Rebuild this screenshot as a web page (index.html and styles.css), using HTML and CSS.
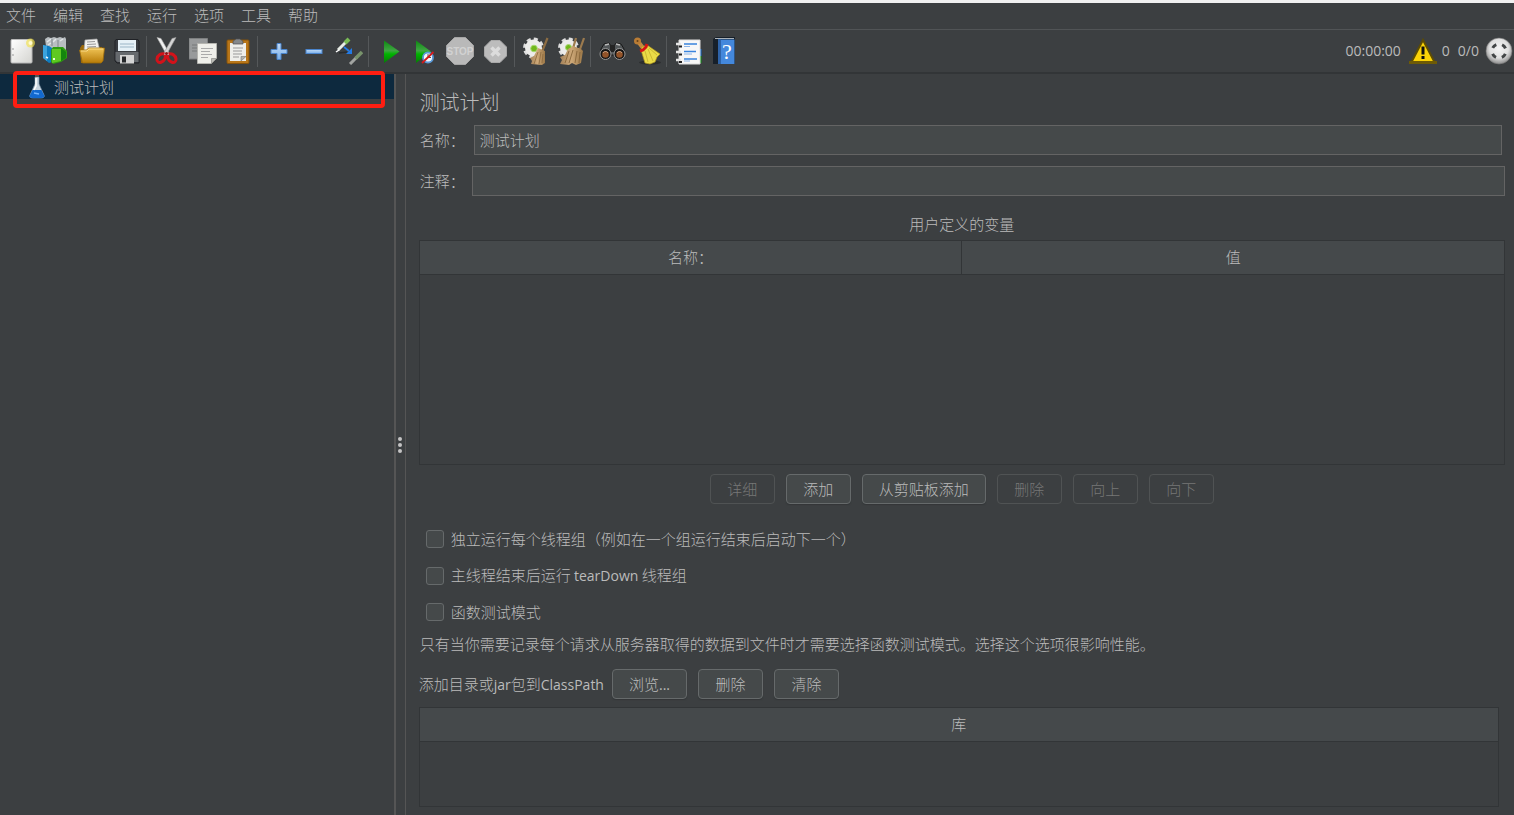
FILE: index.html
```html
<!DOCTYPE html>
<html lang="zh-CN">
<head>
    <meta charset="UTF-8">
    <meta name="viewport" content="width=device-width, initial-scale=1.0">
    <title>测试计划</title>
    <link rel="stylesheet" href="styles.css">
</head>
<body>
    <svg class="defs" width="0" height="0" aria-hidden="true">
        <defs>
            <linearGradient id="paper" x1="0" y1="0" x2="1" y2="1">
                <stop offset="0" stop-color="#ffffff"/><stop offset="1" stop-color="#d4d4d0"/>
            </linearGradient>
            <linearGradient id="green" x1="0" y1="0" x2="0" y2="1">
                <stop offset="0" stop-color="#0c8a10"/><stop offset="0.45" stop-color="#3fa642"/><stop offset="0.6" stop-color="#00b400"/><stop offset="1" stop-color="#067a06"/>
            </linearGradient>
            <linearGradient id="gold" x1="0" y1="0" x2="0" y2="1">
                <stop offset="0" stop-color="#f0c456"/><stop offset="1" stop-color="#b87c08"/>
            </linearGradient>
            <linearGradient id="blue" x1="0" y1="0" x2="0" y2="1">
                <stop offset="0" stop-color="#c4dcf6"/><stop offset="1" stop-color="#7ab0ea"/>
            </linearGradient>
            <linearGradient id="straw" x1="0" y1="0" x2="1" y2="0">
                <stop offset="0" stop-color="#a5835a"/><stop offset="0.5" stop-color="#cda878"/><stop offset="1" stop-color="#9b7747"/>
            </linearGradient>
            <radialGradient id="ball" cx="0.5" cy="0.4" r="0.6">
                <stop offset="0" stop-color="#f4f4f4"/><stop offset="0.6" stop-color="#e0e0e0"/><stop offset="1" stop-color="#8c8c8c"/>
            </radialGradient>
        </defs>
    </svg>

    <nav class="menubar">
        <button>文件</button>
        <button>编辑</button>
        <button>查找</button>
        <button>运行</button>
        <button>选项</button>
        <button>工具</button>
        <button>帮助</button>
    </nav>

    <header class="toolbar">
        <button aria-label="新建">
            <svg viewBox="0 0 28 28"><rect x="3" y="2.5" width="21" height="23.5" rx="1" fill="url(#paper)" stroke="#b9b9b9"/><path d="M5 11v2M5 17v2" stroke="#999"/><circle cx="22.500" cy="6" r="4.500" fill="#f3e24c" opacity=".65"/><circle cx="22.500" cy="6" r="2" fill="#fffbd0"/></svg>
        </button>
        <button aria-label="模板">
            <svg viewBox="0 0 28 28"><path d="M2 2l3-2 3 1 3-1 3 1 3-1 3 1 2-1 1 2v14H4z" fill="#b9bec1"/><path d="M4 5l4-3M10 5l3-3M17 4l3-2M5 8l3-2" stroke="#e3e6e8" stroke-width="1.500"/><path d="M9 2v7M15 3v8" stroke="#7f878b"/><path d="M0 8l6 1 3 2v14l-3 1-6-5z" fill="#0f7cc0"/><path d="M0 8l4 1v15l-4-3z" fill="#3ba3dd"/><path d="M3 20l2 1" stroke="#e8f6ff" stroke-width="1.500"/><path d="M8 13l2-3h10l4 4v7l-6 4-8 2-2-2z" fill="#2f9d10"/><path d="M9 12l9 0v12l-9 2z" fill="#5fc922"/><path d="M18 11l5 4v6l-5 3z" fill="#14850d"/><path d="M10 21h2v2h-2z" fill="#e9ffdc"/></svg>
        </button>
        <button aria-label="打开">
            <svg viewBox="0 0 28 28"><path d="M2 11l2-3h7l2 2h11v16H3z" fill="#9c6a0b"/><path d="M7 3l12-1 3 12H6z" fill="#f2f2f0" stroke="#aaa" stroke-width=".7"/><path d="M9 5l8-.5M9 7.500l9-.5M9 10l9-.5" stroke="#999"/><path d="M1.500 13h7l2-2h16l-1.500 13-2 2H4.500z" fill="url(#gold)" stroke="#a06c08" stroke-width=".8"/><path d="M3 14h6l2-2h14" stroke="#ffe49b" fill="none" stroke-width=".8"/></svg>
        </button>
        <button aria-label="保存">
            <svg viewBox="0 0 28 28"><path d="M3 2.500h22l1 2V26H4l-2-2V4z" fill="#3a3d42" stroke="#202226"/><path d="M2.500 15h23v10h-21l-2-2z" fill="#666a6e"/><rect x="5" y="3" width="18" height="11" fill="#e5f0f6"/><path d="M7 7h14M7 10h14" stroke="#9bb5c6"/><rect x="7" y="18" width="14" height="8.500" fill="#d4d4d4"/><rect x="9" y="19.500" width="4" height="6" fill="#26282b"/></svg>
        </button>
        <span class="sep"></span>
        <button aria-label="剪切">
            <svg viewBox="0 0 28 28"><path d="M3 .5l4 1 9 16-3 1z" fill="#f1f1f1" stroke="#aaa" stroke-width=".6"/><path d="M22 .5l-4 1-9 16 3 1z" fill="#d4d4d4" stroke="#999" stroke-width=".6"/><path d="M10.500 17c-3-1-7 1-7.500 5-.3 3 2 4 4.500 3 3-1 4-4 4-7M14.500 17c3-1 7 1 7.500 5 .3 3-2 4-4.500 3-3-1-4-4-4-7" fill="none" stroke="#d3121a" stroke-width="3"/><circle cx="12.500" cy="16.500" r="1.500" fill="#8d1015"/></svg>
        </button>
        <button aria-label="复制">
            <svg viewBox="0 0 28 28"><path d="M0 1.500h18.500V22H0z" fill="#989a9b" stroke="#7d7f80"/><path d="M3 8h9M3 11h6M3 14h6" stroke="#767879"/><path d="M8.500 6.500h19v15l-5 5h-14z" fill="#efefea" stroke="#b5b5b0"/><path d="M22.500 26.500v-5h5z" fill="#bdbdb8" stroke="#8d8d88" stroke-width=".7"/><path d="M12 11.500h12M12 14.500h9M12 17.500h11M12 20.500h7" stroke="#aaa"/></svg>
        </button>
        <button aria-label="粘贴">
            <svg viewBox="0 0 28 28"><rect x="3" y="3" width="22" height="23.500" rx="1" fill="#b87619" stroke="#85520b"/><path d="M6 6h16v18H6z" fill="#eeeeea"/><path d="M17 24v-4.500h5z" fill="#b4b4ae" stroke="#777" stroke-width=".6"/><path d="M9 5c0-2 2-1.500 3-3h4c1 1.500 3 1 3 3v2H9z" fill="#85888a" stroke="#4d4f50" stroke-width=".7"/><path d="M9 11h10M9 14h9M9 17h9M9 20h6" stroke="#999"/></svg>
        </button>
        <span class="sep"></span>
        <button aria-label="展开">
            <svg viewBox="0 0 28 28"><path d="M12 6.500h4v6h6v4h-6v6h-4v-6H6v-4h6z" fill="url(#blue)" stroke="#4a84cc"/></svg>
        </button>
        <button aria-label="折叠">
            <svg viewBox="0 0 28 28"><rect x="6" y="12.500" width="16" height="4" fill="url(#blue)" stroke="#4a84cc"/></svg>
        </button>
        <button aria-label="切换">
            <svg viewBox="0 0 28 28"><path d="M4 16l8-1" stroke="#292b2c" stroke-width="1.500"/><path d="M3 13L11 5" stroke="#e8ede6" stroke-width="3"/><path d="M1 15l3-2" stroke="#fff" stroke-width="1.500"/><path d="M10 6l4-4" stroke="#79bb55" stroke-width="4"/><path d="M9 10l5 4" stroke="#237be6" stroke-width="1.800"/><path d="M17 11v6h-6z" fill="#237be6"/><path d="M15 27l7-7" stroke="#a2a4a1" stroke-width="3"/><path d="M20.500 21.500L27 15" stroke="#78936b" stroke-width="3.500"/></svg>
        </button>
        <span class="sep"></span>
        <button aria-label="启动">
            <svg viewBox="0 0 28 28"><path d="M8 3.500l15.500 11L8 26z" fill="url(#green)"/></svg>
        </button>
        <button aria-label="不停顿开始">
            <svg viewBox="0 0 28 28"><path d="M5 3.500l15 11L5 26z" fill="url(#green)"/><circle cx="17" cy="20.500" r="5" fill="#f5f8fc" stroke="#5a9ad8" stroke-width="1.800"/><path d="M17 17v3.500h3" stroke="#555" fill="none"/><path d="M11 26L22.500 15" stroke="#d41a1a" stroke-width="1.800"/></svg>
        </button>
        <button aria-label="停止" disabled>
            <svg viewBox="0 0 28 28"><path d="M8.500.5h11l8 8v11l-8 8h-11l-8-8v-11z" fill="#b9b9b9" stroke="#a5a5a5"/><text x="14" y="18" text-anchor="middle" class="stop-text">STOP</text></svg>
        </button>
        <button aria-label="关闭" disabled>
            <svg viewBox="0 0 28 28"><path d="M10 3.500h9l6.500 6.500v9L19 25.500h-9L3.500 19v-9z" fill="#bcbcbc" stroke="#a9a9a9"/><path d="M10.500 10.500l8 8M18.500 10.500l-8 8" stroke="#dcdcdc" stroke-width="3.500"/></svg>
        </button>
        <span class="sep"></span>
        <button aria-label="清除">
            <svg viewBox="0 0 28 28"><circle cx="11.500" cy="11" r="9" fill="none" stroke="#dedede" stroke-width="3" stroke-dasharray="4 3.070"/><circle cx="11.500" cy="11" r="8.500" fill="#ececea"/><circle cx="12" cy="11.500" r="3.300" fill="#71b81b" stroke="#a8d870"/><path d="M25.500 1L19.500 16" stroke="#8d6d43" stroke-width="2.200"/><path d="M16 11l7 3v12l-3 2-11-1 1-3-2-3 4-2z" fill="url(#straw)"/><path d="M16 15l-4 12M19 15l-2 12M21 17l-1 9" stroke="#8a683c" stroke-width=".8"/></svg>
        </button>
        <button aria-label="清除全部">
            <svg viewBox="0 0 28 28"><circle cx="11.500" cy="11" r="9" fill="none" stroke="#dedede" stroke-width="3" stroke-dasharray="4 3.070"/><circle cx="11.500" cy="11" r="8.500" fill="#ececea"/><circle cx="11.500" cy="10.500" r="3" fill="#71b81b" stroke="#a8d870"/><path d="M19 1l-4 14M27 1l-5 14" stroke="#9b7a4e" stroke-width="2.200"/><path d="M11 12l5-3 8 3 2 2-2 12-5 2-4-2-3 2-9-1 2-4-2-3 5-2z" fill="url(#straw)"/><path d="M12 14L8 26M16 13l-4 13M20 14l-2 12M23 15l-1 11" stroke="#866439" stroke-width=".9"/></svg>
        </button>
        <span class="sep"></span>
        <button aria-label="查找">
            <svg viewBox="0 0 28 28"><path d="M3 12l3-5 5-1 2 3h3l2-3 5 1 3 5v6H3z" fill="#54585a" stroke="#171717"/><path d="M7 8l4-1M18 7l4 1" stroke="#bbb" stroke-width="1.500"/><rect x="12" y="8" width="5" height="7" fill="#242424"/><circle cx="7.500" cy="17" r="5.500" fill="#151515" stroke="#969696"/><circle cx="21.500" cy="17" r="5.500" fill="#151515" stroke="#969696"/><circle cx="7.500" cy="17.500" r="3.300" fill="#925329"/><circle cx="21.500" cy="17.500" r="3.300" fill="#925329"/><path d="M5 16c1-2 4-2 5 0M19 16c1-2 4-2 5 0" stroke="#d4ab8b" fill="none"/></svg>
        </button>
        <button aria-label="重置查找">
            <svg viewBox="0 0 28 28"><ellipse cx="17" cy="25.500" rx="11" ry="2" fill="#2b2d2e"/><path d="M4 3l6 8" stroke="#c58a3e" stroke-width="4" stroke-linecap="round"/><circle cx="4.500" cy="4" r="3.500" fill="#b97c35"/><circle cx="4.500" cy="4" r="1" fill="#64401a"/><path d="M9 10l5-2 13 9-3 3-2 5-5 2-5-1-4-13z" fill="#eadb47" stroke="#b59b1d" stroke-width=".7"/><path d="M12 14l3 11M15 12l5 12M16 11l8 7" stroke="#c4ae2c" stroke-width=".8"/><path d="M7 14l3-1 3-3 1-3" stroke="#d51515" stroke-width="3" fill="none"/></svg>
        </button>
        <span class="sep"></span>
        <button aria-label="函数助手对话框">
            <svg viewBox="0 0 28 28"><rect x="22" y="12" width="5.500" height="7" fill="#1468c4"/><rect x="22" y="19" width="5.500" height="7" fill="#118b16"/><path d="M5 3h21v24H5z" fill="#f7f7f7" stroke="#ddd"/><path d="M10 7h13M10 14.500h12M10 22h13" stroke="#3a84dd" stroke-width="1.300"/><path d="M10 9.500h6M10 17h8M10 24h6" stroke="#8bb4e8"/><path d="M2 7h5M2 15h5M2 23h5" stroke="#e5e5e5" stroke-width="2.500"/><path d="M5 9.500h3M5 17.500h3M5 25h3" stroke="#222" stroke-width="2"/></svg>
        </button>
        <button aria-label="帮助">
            <svg viewBox="0 0 28 28"><path d="M4 2l3-2h19v27H4z" fill="#17202a"/><path d="M6 1.500h19" stroke="#a9b1b8"/><path d="M9 2.500h16.500V27H9z" fill="#4488dc"/><path d="M9 2.500h3V27H9z" fill="#2e63a8"/><text x="18" y="22" text-anchor="middle" class="help-text">?</text></svg>
        </button>

        <div class="status">
            <span class="time">00:00:00</span>
            <button aria-label="日志" class="log">
                <svg viewBox="0 0 28 28"><path d="M14 3L2.500 25h23z" fill="#fbd307" stroke="#5c4c05" stroke-width="2"/><path d="M0 25.500h28" stroke="#6d5a06" stroke-width="3"/><path d="M14 9.500v8" stroke="#111" stroke-width="3"/><path d="M14 19v3" stroke="#111" stroke-width="3"/></svg>
                <span>0</span>
            </button>
            <span>0/0</span>
            <svg viewBox="0 0 28 28" class="run-state"><circle cx="14" cy="14" r="13" fill="url(#ball)" stroke="#777" stroke-width=".6"/><circle cx="14" cy="14" r="7" fill="none" stroke="#424546" stroke-width="3" stroke-dasharray="5 6" stroke-dashoffset="-3"/></svg>
        </div>
    </header>

    <main class="workspace">
        <aside class="tree">
            <a href="#plan" class="node">
                <svg viewBox="0 0 16 24"><path d="M6 2h4v7l5 11c1 2-1 3-3 3H4c-2 0-4-1-3-3L6 9z" fill="#c7d4df" stroke="#7890a3" stroke-width=".7"/><path d="M3.500 15h9l3 6c0 1-1 2-3 2h-9c-2 0-3-1-3-2z" fill="#1269cf"/><path d="M7 3v8l-2 4" stroke="#fff" fill="none" stroke-width="1.500"/><path d="M5 18l5 1" stroke="#71b4ff" stroke-width="1.500"/><path d="M6 0h4v2H6z" fill="#555"/></svg>
                <span>测试计划</span>
            </a>
            <div class="highlight"></div>
        </aside>
        <div class="divider"><i></i><i></i><i></i></div>

        <section class="plan" id="plan">
            <h1>测试计划</h1>
            <div class="field name">
                <label for="name">名称：</label>
                <input type="text" id="name" value="测试计划">
            </div>
            <div class="field comment">
                <label for="comment">注释：</label>
                <input type="text" id="comment">
            </div>

            <h2>用户定义的变量</h2>
            <div class="pane variables">
                <table>
                    <thead><tr><th>名称：</th><th>值</th></tr></thead>
                    <tbody></tbody>
                </table>
            </div>
            <div class="actions">
                <button class="btn" disabled>详细</button>
                <button class="btn">添加</button>
                <button class="btn">从剪贴板添加</button>
                <button class="btn" disabled>删除</button>
                <button class="btn" disabled>向上</button>
                <button class="btn" disabled>向下</button>
            </div>

            <div class="checks">
                <label><input type="checkbox"><span>独立运行每个线程组（例如在一个组运行结束后启动下一个）</span></label>
                <label><input type="checkbox"><span>主线程结束后运行 <span class="latin">tearDown</span> 线程组</span></label>
                <label><input type="checkbox"><span>函数测试模式</span></label>
            </div>
            <p class="note">只有当你需要记录每个请求从服务器取得的数据到文件时才需要选择函数测试模式。选择这个选项很影响性能。</p>

            <div class="classpath">
                <span>添加目录或<span class="latin">jar</span>包到<span class="latin">ClassPath</span></span>
                <button class="btn">浏览<span class="latin">...</span></button>
                <button class="btn">删除</button>
                <button class="btn">清除</button>
            </div>
            <div class="pane library">
                <table>
                    <thead><tr><th>库</th></tr></thead>
                    <tbody></tbody>
                </table>
            </div>
        </section>
    </main>
</body>
</html>
```

FILE: styles.css
```css
* {
    box-sizing: border-box;
}

body {
    margin: 0;
    min-height: 100vh;
    display: flex;
    flex-direction: column;
    border-top: 3px solid #f0f0f0;
    background-color: #3c3f41;
    color: #bbbbbb;
    font-family: "Noto Sans CJK SC", sans-serif;
    font-size: 15px;
    font-weight: 300;
    line-height: 20px;
}

button,
input {
    font: inherit;
    color: inherit;
}

.defs {
    position: absolute;
}

.latin,
.status {
    font-family: "Open Sans", "Noto Sans", sans-serif;
    font-size: 14px;
    font-weight: 400;
}

/* menu */
.menubar {
    display: flex;
    gap: 17px;
    padding: 2px 6px 4px;
    border-bottom: 1px solid #515456;
}

.menubar button {
    padding: 0;
    border: none;
    background: none;
}

/* toolbar */
.toolbar {
    display: flex;
    align-items: center;
    height: 44px;
    padding-left: 4px;
    border-bottom: 2px solid #323537;
}

.toolbar button {
    display: flex;
    align-items: center;
    justify-content: center;
    width: 35px;
    height: 35px;
    padding: 0;
    border: none;
    background: none;
}

.toolbar svg {
    width: 28px;
    height: 28px;
    flex: none;
}

.sep {
    width: 1px;
    height: 31px;
    margin: 0 3px 0 2px;
    background-color: #55585a;
}

.stop-text {
    font: 700 10px "Liberation Sans", sans-serif;
    fill: #d2d2d2;
}

.help-text {
    font: 22px "Liberation Serif", serif;
    fill: #ffffff;
}

.status {
    display: flex;
    align-items: center;
    gap: 8px;
    margin-left: auto;
}

.toolbar .log {
    width: auto;
    gap: 5px;
}

.toolbar .run-state {
    margin: 0 1px 0 -2px;
}

/* split pane */
.workspace {
    flex: 1;
    display: flex;
}

.tree {
    position: relative;
    width: 26%;
    flex: none;
}

.node {
    display: flex;
    align-items: center;
    gap: 9px;
    height: 25px;
    padding-left: 29px;
    background-color: #0d293e;
    color: inherit;
    text-decoration: none;
}

.node svg {
    width: 16px;
    height: 24px;
}

.highlight {
    position: absolute;
    top: -3px;
    left: 13px;
    right: 9px;
    height: 37px;
    border: 4px solid #ff1e12;
    border-radius: 4px;
    pointer-events: none;
}

.divider {
    display: flex;
    flex-direction: column;
    align-items: center;
    justify-content: center;
    gap: 2px;
    width: 12px;
    flex: none;
    border-left: 2px solid #555555;
    border-right: 1px solid #555555;
}

.divider i {
    width: 4px;
    height: 4px;
    border-radius: 50%;
    background-color: #c4c4c4;
}

/* test plan */
.plan {
    flex: 1;
    min-width: 0;
    padding: 14px 9px 8px 13px;
}

h1 {
    margin: 0 0 9px 1px;
    font-size: 20px;
    font-weight: 300;
    line-height: 28px;
}

.field {
    display: flex;
    align-items: center;
    margin-left: 1px;
}

.field label {
    width: 52px;
    flex: none;
}

.field input {
    flex: 1;
    min-width: 0;
    height: 30px;
    padding: 0 5px 2px;
    border: 1px solid #646464;
    border-radius: 0;
    background-color: #45494a;
}

.name {
    margin-bottom: 11px;
}

.name input {
    margin: 0 3px 0 2px;
}

h2 {
    margin: 18px 0 6px;
    font-size: 15px;
    font-weight: 300;
    text-align: center;
}

.pane {
    border: 1px solid #323537;
}

.variables {
    min-height: 225px;
}

.library {
    min-height: 100px;
    margin-right: 6px;
}

table {
    width: 100%;
    border-collapse: collapse;
    table-layout: fixed;
}

th {
    height: 33px;
    padding: 0;
    border-bottom: 1px solid #323537;
    background-color: #45494b;
    font-weight: 300;
}

th + th {
    border-left: 1px solid #323537;
}

.actions {
    display: flex;
    justify-content: center;
    gap: 11px;
    margin-top: 9px;
}

.btn {
    min-width: 65px;
    height: 30px;
    padding: 0 16px;
    border: 1px solid #666a6b;
    border-radius: 4px;
    background-color: #45494a;
    box-shadow: 0 1px 1px #333638;
}

.btn:disabled {
    border-color: #505354;
    background: none;
    box-shadow: none;
    color: #777777;
}

.checks {
    display: flex;
    flex-direction: column;
    align-items: flex-start;
    gap: 16px;
    margin: 25px 0 12px 7px;
}

.checks label {
    display: flex;
    align-items: center;
    gap: 7px;
}

.checks input {
    appearance: none;
    width: 18px;
    height: 18px;
    margin: 0;
    border: 1px solid #666a6b;
    border-radius: 3px;
    background-color: #45494a;
}

.note {
    margin: 0 0 15px 1px;
}

.classpath {
    display: flex;
    align-items: center;
    gap: 11px;
    margin-bottom: 8px;
}

.classpath > span {
    margin-right: -3px;
}
```
